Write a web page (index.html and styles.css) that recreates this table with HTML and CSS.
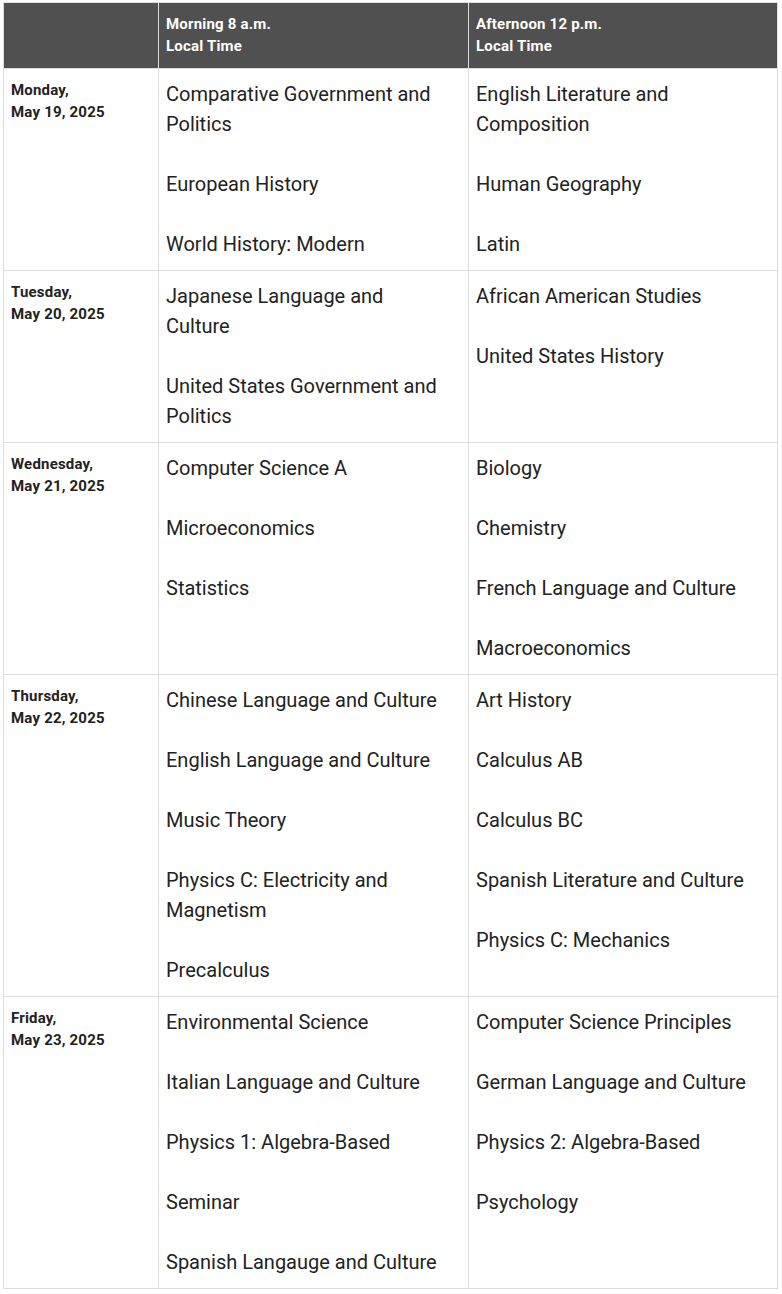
FILE: index.html
```html
<!DOCTYPE html>
<html lang="en">
<head>
<meta charset="utf-8">
<title>Exam Schedule</title>
<link rel="stylesheet" href="styles.css">
</head>
<body>
<table class="schedule">
  <colgroup>
    <col class="col-date">
    <col class="col-am">
    <col class="col-pm">
  </colgroup>
  <thead>
    <tr>
      <th></th>
      <th>Morning 8 a.m.<br>Local Time</th>
      <th>Afternoon 12 p.m.<br>Local Time</th>
    </tr>
  </thead>
  <tbody>
    <tr>
      <td class="date">Monday,<br>May 19, 2025</td>
      <td><p>Comparative Government and Politics</p><p>European History</p><p>World History: Modern</p></td>
      <td><p>English Literature and Composition</p><p>Human Geography</p><p>Latin</p></td>
    </tr>
    <tr>
      <td class="date">Tuesday,<br>May 20, 2025</td>
      <td><p>Japanese Language and Culture</p><p>United States Government and Politics</p></td>
      <td><p>African American Studies</p><p>United States History</p></td>
    </tr>
    <tr>
      <td class="date">Wednesday,<br>May 21, 2025</td>
      <td><p>Computer Science A</p><p>Microeconomics</p><p>Statistics</p></td>
      <td><p>Biology</p><p>Chemistry</p><p>French Language and Culture</p><p>Macroeconomics</p></td>
    </tr>
    <tr>
      <td class="date">Thursday,<br>May 22, 2025</td>
      <td><p>Chinese Language and Culture</p><p>English Language and Culture</p><p>Music Theory</p><p>Physics C: Electricity and Magnetism</p><p>Precalculus</p></td>
      <td><p>Art History</p><p>Calculus AB</p><p>Calculus BC</p><p>Spanish Literature and Culture</p><p>Physics C: Mechanics</p></td>
    </tr>
    <tr>
      <td class="date">Friday,<br>May 23, 2025</td>
      <td><p>Environmental Science</p><p>Italian Language and Culture</p><p>Physics 1: Algebra-Based</p><p>Seminar</p><p>Spanish Langauge and Culture</p></td>
      <td><p>Computer Science Principles</p><p>German Language and Culture</p><p>Physics 2: Algebra-Based</p><p>Psychology</p></td>
    </tr>
  </tbody>
</table>
</body>
</html>
```
FILE: styles.css
```css
html, body {
  margin: 0;
  padding: 0;
  background: #ffffff;
}

body {
  padding: 2px 4px 0 3px;
  font-family: Roboto, "Liberation Sans", Arial, sans-serif;
  color: #222222;
}

.schedule {
  border-collapse: collapse;
  table-layout: fixed;
  width: 774px;
  border: 1px solid #dddddd;
}

.col-date { width: 155px; }
.col-am { width: 310px; }
.col-pm { width: 309px; }

.schedule th {
  background: #505050;
  color: #ffffff;
  font-size: 15px;
  font-weight: 700;
  line-height: 22px;
  letter-spacing: 0.2px;
  text-align: left;
  vertical-align: middle;
  padding: 10px 20px 11px 7px;
  height: 44px;
  border: 1px solid #dddddd;
}

.schedule td {
  vertical-align: top;
  border: 1px solid #dddddd;
  padding: 10px 20px 11px 7px;
  font-size: 20px;
  line-height: 30px;
}

.schedule td.date {
  font-size: 15px;
  font-weight: 700;
  line-height: 22px;
  letter-spacing: 0.2px;
}

.schedule p {
  margin: 0 0 30px;
}

.schedule p:last-child {
  margin-bottom: 0;
}
```
